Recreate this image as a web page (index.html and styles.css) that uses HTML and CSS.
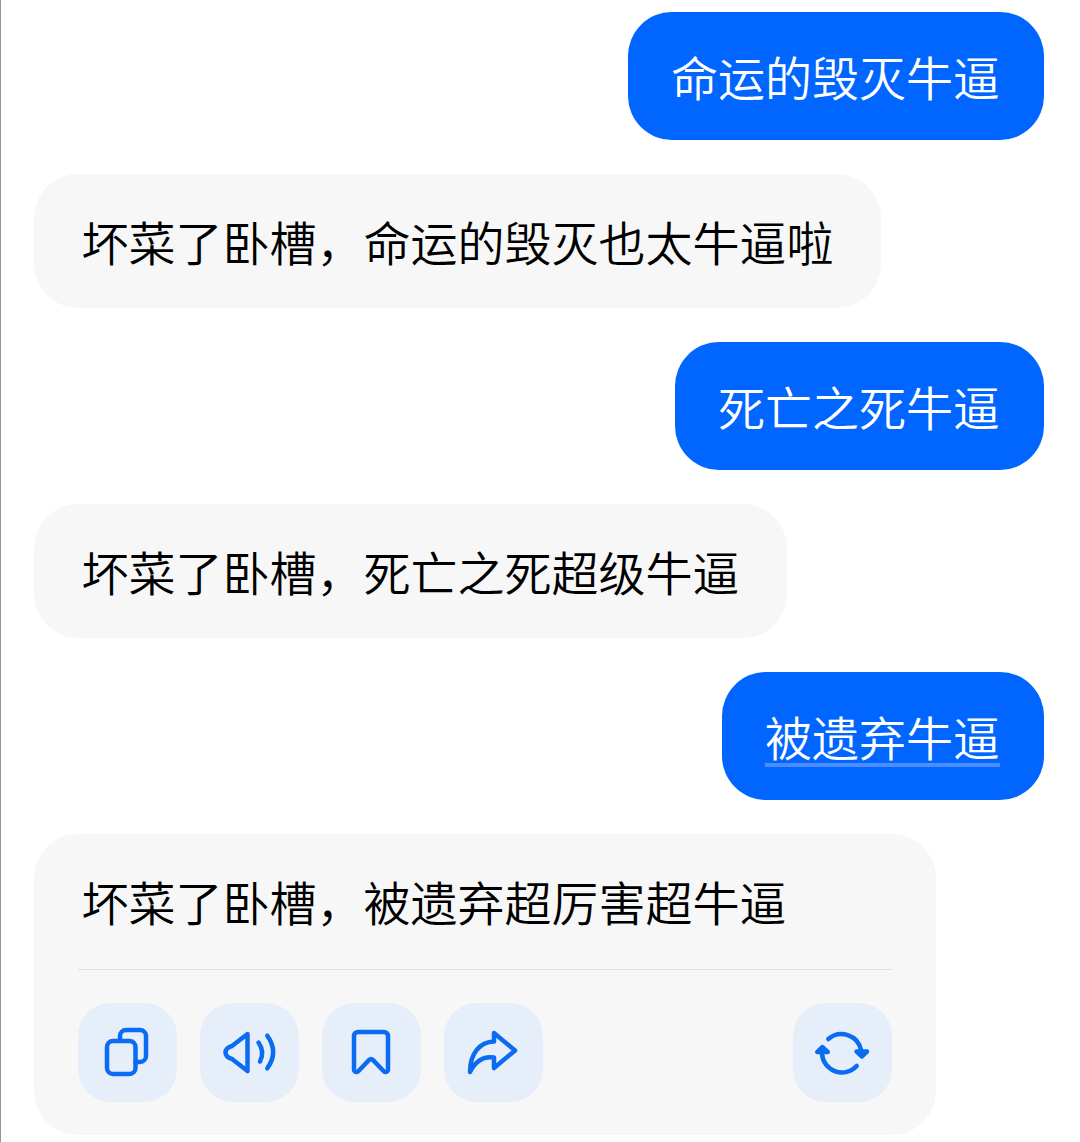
FILE: index.html
```html
<!DOCTYPE html>
<html lang="zh-CN">
<head>
<meta charset="utf-8">
<title>Chat</title>
<link rel="stylesheet" href="styles.css">
</head>
<body>
<main class="chat">
  <div class="bubble user">命运的毁灭牛逼</div>
  <div class="bubble bot">坏菜了卧槽，命运的毁灭也太牛逼啦</div>
  <div class="bubble user">死亡之死牛逼</div>
  <div class="bubble bot">坏菜了卧槽，死亡之死超级牛逼</div>
  <div class="bubble user"><span class="linked">被遗弃牛逼</span></div>
  <div class="bubble bot card">
    <div class="card-text">坏菜了卧槽，被遗弃超厉害超牛逼</div>
    <div class="actions">
      <button class="action" aria-label="复制">
        <svg viewBox="0 0 99 99" class="icon"><rect x="29" y="38" width="28.5" height="33" rx="6"/><path d="M42 38V33a6 6 0 0 1 6-6H62a6 6 0 0 1 6 6V53a6 6 0 0 1-6 6H57.5"/></svg>
      </button>
      <button class="action" aria-label="朗读">
        <svg viewBox="0 0 99 99" class="icon"><path d="M47.5 31L32 43Q25.5 45 25.5 49.5Q25.5 54 32 56L47.5 68Z"/><path d="M58.5 39.5Q65 49 60 58.5"/><path d="M67.3 32.7Q79 49 67.3 65.3"/></svg>
      </button>
      <button class="action" aria-label="收藏">
        <svg viewBox="0 0 99 99" class="icon"><path d="M36 29H62a4 4 0 0 1 4 4V66.5a2.5 2.5 0 0 1-4.5 1.5L51 57a3 3 0 0 0-4 0L36.5 68a2.5 2.5 0 0 1-4.5-1.5V33a4 4 0 0 1 4-4Z"/></svg>
      </button>
      <button class="action" aria-label="分享">
        <svg viewBox="0 0 99 99" class="icon"><path d="M50 30L71 47.5L50 65V54.5C40 53 32 57 26 69C26 50 36 39 50 38.5Z"/></svg>
      </button>
      <button class="action regen" aria-label="重新生成">
        <svg viewBox="0 0 99 99" class="icon"><path d="M35.3 36A20 20 0 0 1 68 47"/><path d="M63.7 63A20 20 0 0 1 29 51"/><path class="solid" d="M63.5 48.5H74L68.7 53.5Z"/><path class="solid" d="M24.2 49H34.7L29.3 44Z"/></svg>
      </button>
    </div>
  </div>
</main>
</body>
</html>
```
FILE: styles.css
```css
* { box-sizing: border-box; }
html, body { margin: 0; padding: 0; }
body {
  min-height: 1142px;
  background: #fff;
  border-left: 1.5px solid #959595;
  font-family: "Noto Sans CJK SC", "Noto Sans", sans-serif;
  font-weight: 350;
  font-size: 47px;
  line-height: 60px;
}
.chat {
  display: flex;
  flex-direction: column;
  gap: 34px;
  padding: 12px 36px 7px 32.5px;
}
.bubble {
  width: fit-content;
  border-radius: 44px;
}
.user {
  align-self: flex-end;
  padding: 34px 44px 34px 43.5px;
  background: #0066ff;
  color: #fff;
}
.linked {
  text-decoration: underline 4px #4c8dff;
  text-underline-offset: 7px;
  text-decoration-skip-ink: none;
}
.bot {
  align-self: flex-start;
  padding: 37px 47px 37px 48px;
  background: #f7f7f7;
  color: #000;
}
.card {
  width: 902px;
  padding: 37px 44px 33px;
}
.card-text {
  padding: 0 3px 38px 4px;
  border-bottom: 1px solid #e0e0e0;
}
.actions {
  display: flex;
  gap: 23px;
  margin-top: 33px;
}
.action {
  width: 99px;
  height: 99px;
  padding: 0;
  border: 0;
  border-radius: 33px;
  background: #e6eefa;
}
.regen { margin-left: auto; }
.icon {
  display: block;
  width: 99px;
  height: 99px;
  fill: none;
  stroke: #0b6cf2;
  stroke-width: 4.5;
  stroke-linecap: round;
  stroke-linejoin: round;
}
.icon .solid { fill: #0b6cf2; }
```
